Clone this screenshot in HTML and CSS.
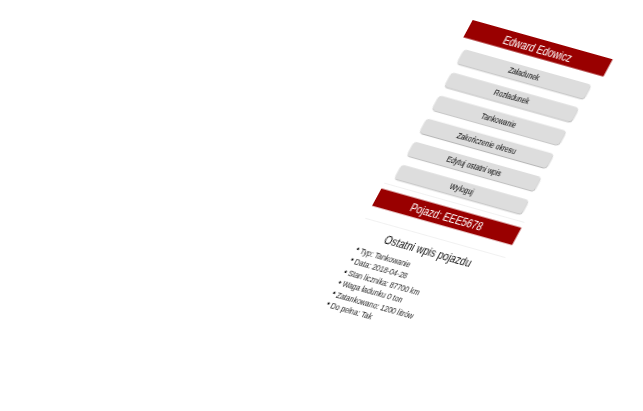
FILE: index.html
```html
<!DOCTYPE html>
<html lang="pl">
  <head>
    <meta charset="UTF-8" />
    <meta name="viewport" content="width=device-width, initial-scale=1.0" />
    <title>Ostatni wpis pojazdu</title>
    <link rel="stylesheet" href="styles.css">
  </head>
  <body>
    <div class="screen">
      <div class="banner"><span class="tall">Edward Edowicz</span></div>

      <div class="menu">
        <a class="menu-btn"><span class="tall">Załadunek</span></a>
        <a class="menu-btn"><span class="tall">Rozładunek</span></a>
        <a class="menu-btn"><span class="tall">Tankowanie</span></a>
        <a class="menu-btn"><span class="tall">Zakończenie okresu</span></a>
        <a class="menu-btn"><span class="tall">Edytuj ostatni wpis</span></a>
        <a class="menu-btn"><span class="tall">Wyloguj</span></a>
      </div>

      <div class="rule rule-top"></div>
      <div class="banner banner-vehicle"><span class="tall">Pojazd: EEE5678</span></div>
      <div class="rule rule-bottom"></div>

      <h3 class="last-title"><span class="tall">Ostatni wpis pojazdu</span></h3>
      <ul class="last-list">
        <li><span class="tall">Typ: Tankowanie</span></li>
        <li><span class="tall">Data: 2018-04-28</span></li>
        <li><span class="tall">Stan licznika: 87700 km</span></li>
        <li><span class="tall">Waga ładunku 0 ton</span></li>
        <li><span class="tall">Zatankowano: 1200 litrów</span></li>
        <li><span class="tall">Do pełna: Tak</span></li>
      </ul>
    </div>
  </body>
</html>
```

FILE: styles.css
```css
html,
body {
  margin: 0;
  height: 100%;
  overflow: hidden;
  background-color: #fff;
}

/* the whole page is a skewed photo of a phone screen */
.screen {
  width: 200px;
  font-family: "Liberation Sans", Arial, sans-serif;
  color: #222;
  transform-origin: 0 0;
  transform: matrix(0.7, 0.1965, -0.39, 0.72, 472.7, 20);
  filter: blur(0.3px);
}

/* glyphs in the photo are stretched along the short side */
.tall {
  display: inline-block;
  transform: scaleY(1.22);
}

.banner {
  height: 24px;
  line-height: 25px;
  text-align: center;
  font-size: 13px;
  color: #fff;
  background-color: #990000;
}

.menu {
  display: flex;
  flex-direction: column;
  gap: 12px;
  margin-top: 14px;
  padding: 0 9px;
}

.menu-btn {
  height: 20px;
  line-height: 21px;
  text-align: center;
  font-size: 9.3px;
  color: #000;
  background-color: #ddd;
  border-radius: 5px;
  box-shadow: 0.5px 1px 1px rgba(0, 0, 0, 0.3);
}

.rule {
  height: 1px;
  background-color: #eee;
}

.rule-top {
  margin-top: 8px;
}

.banner-vehicle {
  margin-top: 7px;
}

.rule-bottom {
  margin-top: 17px;
}

.last-title {
  margin: 9px 0 0;
  text-align: center;
  font-size: 13.3px;
  line-height: 17px;
  font-weight: normal;
  color: #111;
}

.last-list {
  margin: 6px 0 0;
  padding-left: 10px;
  list-style: none;
  font-size: 9.6px;
  line-height: 15.3px;
}

.last-list li::before {
  content: "•";
  display: inline-block;
  width: 6px;
  color: #000;
  font-size: 10px;
}
```
